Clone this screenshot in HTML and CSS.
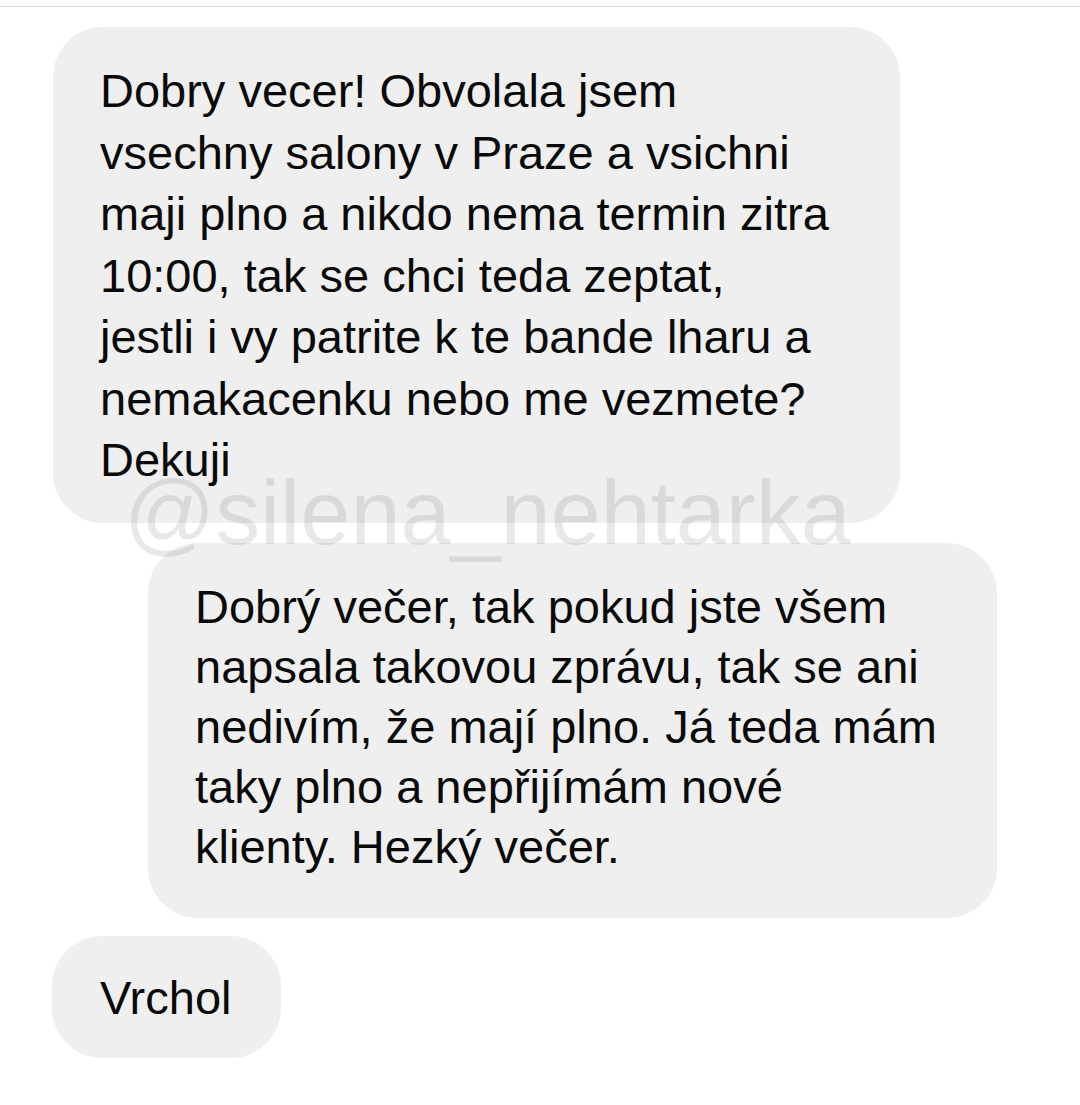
FILE: index.html
```html
<!DOCTYPE html>
<html lang="cs">
<head>
<meta charset="utf-8">
<title>Zprávy</title>
<link rel="stylesheet" href="styles.css">
</head>
<body>
<div class="topbar"></div>
<main class="thread">
  <div class="bubble incoming b1">Dobry vecer! Obvolala jsem<br>vsechny salony v Praze a vsichni<br>maji plno a nikdo nema termin zitra<br>10:00, tak se chci teda zeptat,<br>jestli i vy patrite k te bande lharu a<br>nemakacenku nebo me vezmete?<br>Dekuji</div>
  <div class="bubble outgoing b2">Dobrý večer, tak pokud jste všem<br>napsala takovou zprávu, tak se ani<br>nedivím, že mají plno. Já teda mám<br>taky plno a nepřijímám nové<br>klienty. Hezký večer.</div>
  <div class="bubble incoming b3">Vrchol</div>
  <div class="watermark">@silena_nehtarka</div>
</main>
</body>
</html>
```
FILE: styles.css
```css
html, body {
  margin: 0;
  padding: 0;
  background: #ffffff;
}
body {
  width: 1080px;
  height: 1105px;
  overflow: hidden;
  font-family: "Liberation Sans", Arial, sans-serif;
}
.topbar {
  height: 6px;
  border-bottom: 1px solid #dadada;
}
.thread {
  position: relative;
  display: flex;
  flex-direction: column;
  gap: 20px;
  padding: 20px 0 0 0;
}
.bubble {
  box-sizing: border-box;
  background: #efefef;
  color: #0a0a0a;
  border-radius: 50px;
  font-size: 47px;
  line-height: 61px;
  white-space: nowrap;
}
.b1 {
  margin-left: 53px;
  width: 847px;
  padding: 33px 20px 32px 47px;
  line-height: 61.5px;
}
.b2 {
  margin-left: 148px;
  width: 849px;
  padding: 34px 20px 41px 47px;
  line-height: 60px;
}
.b3 {
  margin-left: 52px;
  margin-top: -2px;
  align-self: flex-start;
  padding: 31px 50px 30px 48px;
}
.watermark {
  position: absolute;
  left: 124px;
  top: 456px;
  font-size: 90px;
  line-height: 100px;
  color: rgba(0, 0, 0, 0.09);
  white-space: nowrap;
  pointer-events: none;
}
```
